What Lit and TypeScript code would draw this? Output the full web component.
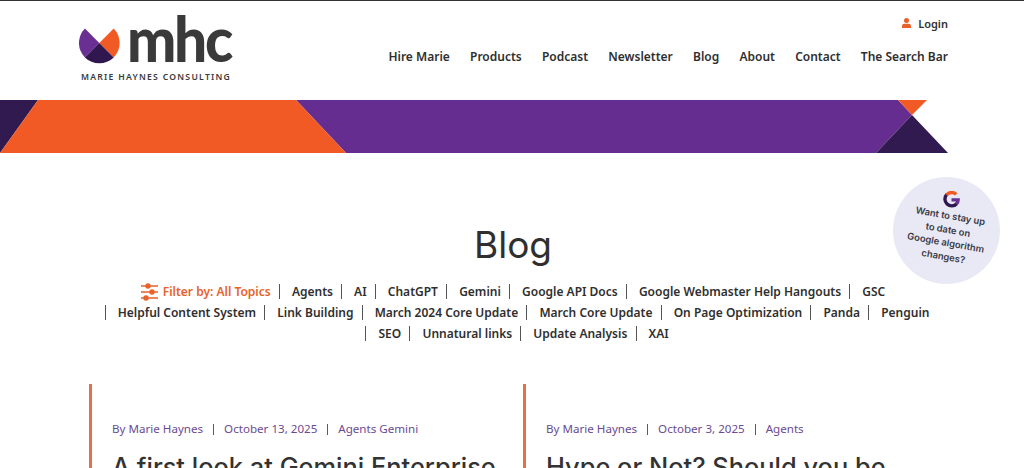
import { LitElement, html, css, svg } from "lit";
import { customElement } from "lit/decorators.js";

const NAV = ["Hire Marie", "Products", "Podcast", "Newsletter", "Blog", "About", "Contact", "The Search Bar"];
const TOPICS = ["Agents", "AI", "ChatGPT", "Gemini", "Google API Docs", "Google Webmaster Help Hangouts", "GSC", "Helpful Content System", "Link Building", "March 2024 Core Update", "March Core Update", "On Page Optimization", "Panda", "Penguin", "SEO", "Unnatural links", "Update Analysis", "XAI"];
const POSTS = [
  { date: "October 13, 2025", cat: "Agents Gemini", title: "A first look at Gemini Enterprise" },
  { date: "October 3, 2025", cat: "Agents", title: "Hype or Not? Should you be" },
];

@customElement("app-root")
export class AppRoot extends LitElement {
  static styles = css`
    :host { display: block; width: 1024px; height: 468px; overflow: hidden; position: relative; background: #fff; font-family: "Noto Sans", sans-serif; color: #2f2f2f; }
    header { height: 99px; border-top: 1px solid #333; display: flex; justify-content: space-between; padding: 0 76px 0 79px; box-sizing: content-box; }
    .logo { padding-top: 11px; width: 156px; }
    .logo-top { display: flex; align-items: flex-start; gap: 5.5px; height: 53px; }
    .logo-top svg { margin-top: 16px; flex: none; }
    .mhc { display: block; font: 900 63px/52px "Lato", sans-serif; color: #3a3a3a; letter-spacing: -2.5px; transform: scaleX(0.93); transform-origin: left center; }
    .tag { font: 600 8.6px/12px "Noto Sans", sans-serif; letter-spacing: 1.28px; color: #3a3a3a; margin: 6px 0 0 2px; white-space: nowrap; }
    .right { display: flex; flex-direction: column; align-items: flex-end; }
    .login { display: flex; align-items: center; gap: 7px; font-size: 11px; font-weight: 600; margin-top: 14px; height: 16px; }
    nav { display: flex; gap: 20.2px; margin-top: 18px; font-size: 12px; font-weight: 600; line-height: 16px; white-space: nowrap; }
    .banner { display: block; width: 948px; height: 53px; }
    h1 { font: 400 37px/44px "Inter", sans-serif; text-align: center; margin: 70px 0 0; padding-left: 2px; color: #2f2f2f; }
    .filters { display: flex; flex-wrap: wrap; justify-content: center; align-items: center; width: 840px; margin: 14px 0 0 93px; font-size: 12px; font-weight: 600; line-height: 21px; }
    .filter { display: flex; align-items: center; gap: 5px; color: #e8622a; }
    .topic { white-space: nowrap; display: flex; align-items: center; }
    .sep { display: inline-block; width: 1px; height: 15px; background: #555; margin: 0 12px 0 8.2px; }
    .posts { display: grid; grid-template-columns: 434px 434px; margin: 40px 0 0 89px; }
    .post { border-left: 3px solid #e0734a; padding: 37px 0 0 20px; }
    .meta { display: flex; align-items: center; font-size: 11.6px; line-height: 16px; color: #6b4a92; white-space: nowrap; }
    .bar { display: inline-block; width: 1px; height: 11px; background: #6b4a92; margin: 0 10px; }
    h2 { font: 500 25.4px/32px "Inter", sans-serif; margin: 14px 0 0; color: #333; white-space: nowrap; }
    .bubble { position: absolute; left: 893px; top: 177px; width: 107px; height: 107px; border-radius: 50%; background: #e9e9f6; display: flex; flex-direction: column; align-items: center; padding-top: 14px; box-sizing: border-box; }
    .bubble svg { margin-left: 10px; flex: none; }
    .bubble p { margin: 1px 0 0; text-align: center; white-space: nowrap; font: 600 9.4px/13.5px "Inter", sans-serif; color: #3a3a44; transform: rotate(10deg); }
  `;

  private logoMark() {
    return html`<svg width="42" height="36" viewBox="79 28 42 36">
      <path fill="#6a2f92" d="M84.9 28.6 L99.3 43 L84.9 57.4 A20.4 20.4 0 0 1 84.9 28.6Z" />
      <path fill="#f15a24" d="M113.7 28.6 L99.3 43 L113.7 57.4 A20.4 20.4 0 0 0 113.7 28.6Z" />
      <path fill="#30174f" d="M99.3 43 L84.9 57.4 A20.4 20.4 0 0 0 113.7 57.4Z" />
    </svg>`;
  }

  private bannerArt() {
    return svg`<svg class="banner" viewBox="0 0 948 53">
      <polygon fill="#662d91" points="296,0 898,0 912,15 876,53 346,53" />
      <polygon fill="#301a4f" points="0,0 38,0 0,53" />
      <polygon fill="#f15a24" points="38,0 296,0 346,53 0,53" />
      <polygon fill="#f15a24" points="898,0 927,0 912,15" />
      <polygon fill="#301a4f" points="912,15 948,53 876,53" />
    </svg>`;
  }

  render() {
    return html`
      <header>
        <div class="logo">
          <div class="logo-top">${this.logoMark()}<span class="mhc">mhc</span></div>
          <div class="tag">MARIE HAYNES CONSULTING</div>
        </div>
        <div class="right">
          <div class="login">
            <svg width="9" height="10" viewBox="0 0 9 10"><circle cx="4.5" cy="2.5" r="2.5" fill="#e8622a"/><path fill="#e8622a" d="M0 10V8Q0 5.8 2.5 5.8H6.5Q9 5.8 9 8V10Z"/></svg>
            Login
          </div>
          <nav>${NAV.map((n) => html`<span>${n}</span>`)}</nav>
        </div>
      </header>
      ${this.bannerArt()}
      <h1>Blog</h1>
      <div class="filters">
        <span class="filter">
          <svg width="17" height="18" viewBox="0 0 17 18" fill="none" stroke="#e8622a" stroke-width="1.4">
            <path d="M0 3H17M0 9H17M0 15H17"/>
            <circle cx="7" cy="3" r="2" fill="#e8622a"/><circle cx="11" cy="9" r="2" fill="#e8622a"/><circle cx="5" cy="15" r="2" fill="#e8622a"/>
          </svg>
          Filter by: All Topics
        </span>
        ${TOPICS.map((t) => html`<span class="topic"><span class="sep"></span>${t}</span>`)}
      </div>
      <div class="posts">
        ${POSTS.map((p) => html`<article class="post">
          <div class="meta">By Marie Haynes<span class="bar"></span>${p.date}<span class="bar"></span>${p.cat}</div>
          <h2>${p.title}</h2>
        </article>`)}
      </div>
      <aside class="bubble">
        <svg width="17" height="17" viewBox="0 0 18 18" fill="none" stroke-width="3.6">
          <path stroke="#30174f" d="M4 3.6A7 7 0 0 0 14.5 13.5"/>
          <path stroke="#f15a24" d="M3.8 4A7 7 0 0 1 14 3.6"/>
          <path stroke="#6a2f92" d="M9 9.4H16A7 7 0 0 1 14.3 13.7"/>
        </svg>
        <p>Want to stay up<br>to date on<br>Google algorithm<br>changes?</p>
      </aside>
    `;
  }
}
